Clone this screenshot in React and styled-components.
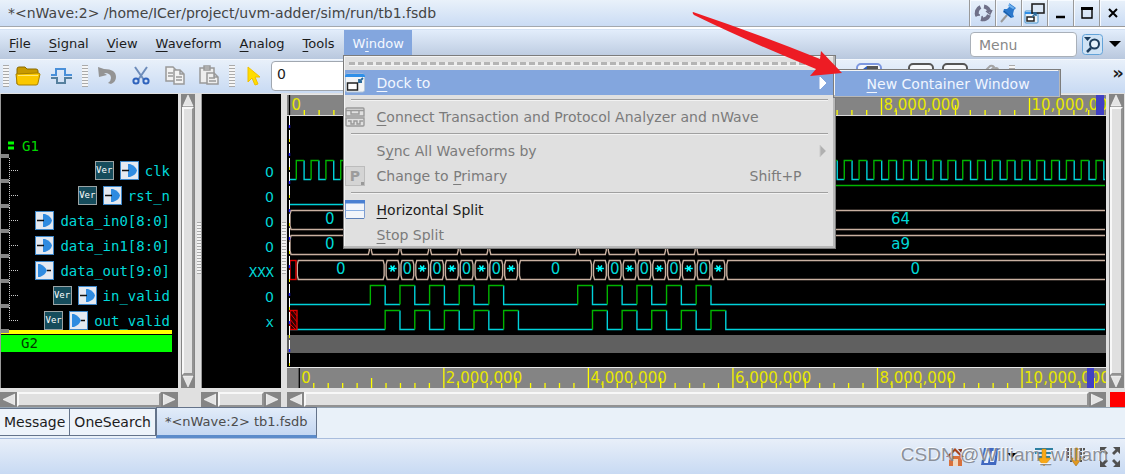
import React from 'react'
import styled, { createGlobalStyle } from "styled-components";

const GlobalStyle = createGlobalStyle`
* { box-sizing: border-box; }
body {
  margin: 0;
  background: #e0e0e0;
  font-family: "DejaVu Sans", sans-serif;
  font-size: 14px;
  color: #1c1c1c;
}
button, input { font: inherit; color: inherit; }
button { padding: 0; border: 0; background: none; }
u { text-underline-offset: 3px; text-decoration-thickness: 1px; }
`

const Page = styled.div`
position: relative;
min-height: 100vh;
display: flex;
flex-direction: column;
overflow: hidden;
`

/* title bar */
const TitleBar = styled.header`
height: 29px;
display: flex;
align-items: stretch;
background: linear-gradient(#e9f1fa, #c9dbf4);
border-bottom: 2px solid #fff;
box-shadow: inset 0 -1px #a3a8ae;
`
const Title = styled.h1`
flex: 1;
margin: 0;
padding-left: 8px;
font-size: 14px;
font-weight: 400;
line-height: 26px;
color: #444;
white-space: nowrap;
overflow: hidden;
`
const TitleButton = styled.button`
width: 26px;
display: flex;
align-items: center;
justify-content: center;
border-left: 1px solid #999;
border-bottom: 1px solid #999;
box-shadow: inset 1px 1px #f6faff;
`

/* menu bar */
const MenuBar = styled.nav`
height: 30px;
display: flex;
align-items: stretch;
gap: 1px;
font-size: 13px;
background: linear-gradient(#e2edfb, #b9c8de);
border-top: 1px solid #d4e2f4;
`
const MenuItem = styled.div`
position: relative;
display: flex;
height: 26px;
z-index: ${(props)=> props.$open ? 5 : 0};
`
const MenuButton = styled.button`
padding: 0 8px 0 9px;
color: ${(props)=> props.$open ? "#f4f8ff" : "#1c1c1c"};
background: ${(props)=> props.$open ? "#83a6de" : "none"};
`
const SearchArea = styled.div`
margin-left: auto;
padding: 2px 3px 0 0;
display: flex;
align-items: flex-start;
gap: 5px;
`
const SearchInput = styled.input`
width: 107px;
height: 25px;
padding: 0 8px;
font-size: 14px;
border: 1px solid #a9b0b9;
border-radius: 4px;
background: #fff;
&::placeholder { color: #888; opacity: 1; }
`
const IconButton = styled.button`
display: flex;
align-items: center;
height: 24px;
`

const Popup = styled.div`
position: absolute;
left: ${(props)=> props.$sub ? "488px" : "-1px"};
top: ${(props)=> props.$sub ? "-1px" : "25px"};
width: ${(props)=> props.$sub ? "228px" : "493px"};
padding: 1px;
font-size: 14px;
background: #e0e0e0;
border: 1px solid #7c7c7c;
box-shadow: inset -2px -2px #b8b8b8, inset 1px 1px #f4f4f4;
`
const TearOff = styled.div`
height: 13px;
padding: 5px 4px 0;
&::before {
  content: "";
  display: block;
  height: 3px;
  background: repeating-linear-gradient(90deg, #b4b4b4 0 6px, #ececec 6px 9px);
  border-bottom: 1px solid #f4f4f4;
}
`
const PopupRow = styled.button`
position: relative;
width: 100%;
height: 25px;
display: flex;
align-items: center;
text-align: left;
padding-right: ${(props)=> props.$sub ? "0" : "7px"};
color: ${(props)=> props.$active ? "#f1f6ff" : props.disabled ? "#7b7b7b" : "#1c1c1c"};
background: ${(props)=> props.$active ? "#83a6de" : "none"};
`
const RowIcon = styled.span`
width: 32px;
height: 22px;
display: flex;
align-items: center;
`
const RowLabel = styled.span`
flex: 1;
white-space: nowrap;
`
const Shortcut = styled.span`
margin-right: 25px;
`
const Divider = styled.hr`
height: 9px;
margin: 0 6px;
border: 0;
background: linear-gradient(transparent 4px, #a0a0a0 4px 5px, #f2f2f2 5px 6px, transparent 6px);
`
const Pointer = styled.svg`
position: absolute;
left: 346px;
top: -20px;
pointer-events: none;
`

/* tool bar */
const ToolBar = styled.div`
height: 34px;
display: flex;
align-items: center;
padding-bottom: 2px;
background: linear-gradient(#e8f0fa, #c8daf3);
border-top: 1px solid #f4f8fd;
`
const Grip = styled.span`
width: 6px;
height: 22px;
margin: 0 2px 0 3px;
background: repeating-linear-gradient(#aaa 0 1px, #f6f6f6 1px 3px);
`
const Tool = styled.button`
width: 34px;
height: 30px;
display: flex;
align-items: center;
justify-content: center;
`
const TimeInput = styled.input`
width: 100px;
height: 30px;
padding: 0 5px 3px;
background: #fff;
border: 1px solid #a0a7b0;
border-radius: 4px;
`
const ToolGroup = styled.div`
margin-left: auto;
margin-right: 108px;
display: flex;
align-items: center;
`
const BoxTool = styled(Tool)`
width: 26px;
height: 26px;
margin: 0 4px;
margin-right: ${(props)=> props.$marker ? "22px" : "4px"};
border: 2px solid ${(props)=> props.$marker ? "#7d98e0" : "#555"};
border-radius: 5px;
background: #f6f8fb;
`
const More = styled.button`
width: 14px;
font-size: 18px;
font-weight: 700;
line-height: 26px;
margin: 0 0 6px -14px;
`

/* panes */
const Panes = styled.main`
display: grid;
grid-template-columns: 178px 18px 5px 80px 6px 1fr 19px;
grid-template-rows: 294px 15px;
row-gap: 4px;
padding-top: 1px;
background: #e0e0e0;
`
const Pane = styled.section`
background: #000;
color: #00d8d8;
font-family: "DejaVu Sans Mono", monospace;
font-size: 14px;
overflow: hidden;
padding-top: ${(props)=> props.$wave ? "0" : "39px"};
border-left: ${(props)=> props.$wave ? "0" : "1px solid #999"};
`
const SignalRow = styled.div`
height: 25px;
display: flex;
align-items: center;
gap: 6px;
padding-right: 8px;
`
const SignalName = styled.span`
white-space: pre;
`
const GroupName = styled.span`
color: ${(props)=> props.$selected ? "#003c00" : "#00d800"};
`
const Spring = styled.span`
flex: 1;
`
const Selected = styled.div`
height: 22px;
margin: -3px 6px 0 0;
padding-left: 20px;
line-height: 18px;
border-top: 4px solid #ff0;
box-shadow: inset 0 1px #000;
background: #0f0;
`
const LangBadge = styled.span`
width: 19px;
height: 19px;
border: 1px solid #9aa3a5;
background: #164c5c;
color: #fff;
font-size: 9px;
line-height: 16px;
text-align: center;
`
const Value = styled.div`
height: 25px;
padding: 1px 7px 0 0;
line-height: 26px;
text-align: right;
font-family: ${(props)=> props.$digit ? '"DejaVu Sans", sans-serif' : "inherit"};
`
const Splitter = styled.div`
background: repeating-linear-gradient(#aaa 0 1px, #f2f2f2 1px 3px) center 128px / 4px 52px no-repeat;
`
const ScrollBar = styled.div`
display: flex;
flex-direction: ${(props)=> props.$vertical ? "column" : "row"};
margin: ${(props)=> props.$vertical ? "0 1px 0 3px" : "0"};
background: #858585;
padding: 0 1px;
`
const ScrollArrow = styled.button`
flex: none;
width: ${(props)=> props.$vertical ? "12px" : "16px"};
height: ${(props)=> props.$vertical ? "13px" : "15px"};
display: flex;
align-items: center;
justify-content: center;
`
const Thumb = styled.div`
flex: 1;
background: #e0e0e0;
border: 2px solid;
border-color: #f8f8f8 #929292 #929292 #f8f8f8;
`
const WaveSvg = styled.svg`
display: block;
width: 100%;
height: 294px;
`
const Corner = styled.div`
margin-left: 4px;
background: #f00;
`

/* bottom tabs and status bar */
const Tabs = styled.div`
height: 32px;
display: flex;
align-items: flex-start;
background: #e9f1f9;
border-bottom: 1px solid #a9bddd;
box-shadow: inset 0 1px #94a4b4;
`
const Tab = styled.button`
height: ${(props)=> props.$active ? "31px" : "28px"};
margin-top: ${(props)=> props.$active ? "0" : "1px"};
padding: ${(props)=> props.$active ? "0 8px 1px" : "0 4px"};
border: 1px solid #64738a;
border-left-width: ${(props)=> props.$active ? "1px" : "0"};
border-bottom: ${(props)=> props.$active ? "3px solid #5b8bca" : "1px solid #64738a"};
font-size: ${(props)=> props.$active ? "13px" : "14px"};
color: ${(props)=> props.$active ? "#4c4c4c" : "#1c1c1c"};
background: ${(props)=> props.$active ? "linear-gradient(#e2ecf9, #c4d7f2)" : "#edf3fa"};
`
const StatusBar = styled.footer`
flex: 1;
min-height: 34px;
position: relative;
display: flex;
justify-content: flex-end;
align-items: center;
gap: 14px;
padding-right: 4px;
background: linear-gradient(#e8eff9, #c8daf3);
`
const Watermark = styled.span`
position: absolute;
right: 17px;
bottom: 8px;
font-family: "Liberation Sans", sans-serif;
font-size: 19px;
color: rgba(128, 132, 140, 0.9);
text-shadow: -1px -1px rgba(255, 255, 255, 0.8);
white-space: nowrap;
`

const CYAN = "#00d2da"
const GREEN = "#00b400"
const BUS = "#c9b0a0"
const END = 818

const menus = [["F", "ile"], ["S", "ignal"], ["V", "iew"], ["W", "aveform"], ["A", "nalog"], ["T", "ools"]]

const signals = [
  { name: "clk", dir: "in", lang: true, value: "0" },
  { name: "rst_n", dir: "in", lang: true, value: "0" },
  { name: "data_in0[8:0]", dir: "in", value: "0" },
  { name: "data_in1[8:0]", dir: "in", value: "0" },
  { name: "data_out[9:0]", dir: "out", value: "XXX" },
  { name: "in_valid", dir: "in", lang: true, value: "0" },
  { name: "out_valid", dir: "out", lang: true, value: "x" },
]

// x of the n-th rising clock edge
const t = (n)=> 9.3 + 14.81 * n

// y of the high level of each signal
const high = { clk: 66.5, rst: 91.5, in0: 116.5, in1: 141.5, out: 166.5, inValid: 191.5, outValid: 216.5 }

const range = (n)=> Array.from({ length: n }, (_, i)=> i)

const clkPulses = range(55).map((n)=> [t(n), Math.min(t(n) + 7.8, END)])
const inPulses = [5, 7, 9, 11, 13, 19, 21, 23, 25, 27].map((n)=> [t(n), t(n + 1)])
const outPulses = [6, 8, 10, 12, 14, 20, 22, 24, 26, 28].map((n)=> [t(n), t(n + 1)])

const in1Data = [[2, t(5), "0"], [t(5), t(7), "99"], [t(7), t(9), "e2"], [t(9), t(11), "f6"], [t(11), t(13), "64"], [t(13), t(19), "20"], [t(19), t(21), "a5"], [t(21), t(23), "e2"], [t(23), t(25), "74"], [t(25), t(27), "b2"], [t(27), END, "a9"]]
const in0Data = [[2, t(5), "0"], [t(5), t(27), "0"], [t(27), END, "64"]]
const outData = [
  [t(0), t(6), "0"],
  ...range(9).map((i)=> [t(6 + i), t(7 + i), i % 2 ? "0" : "*"]),
  [t(15), t(20), "0"],
  ...range(9).map((i)=> [t(20 + i), t(21 + i), i % 2 ? "0" : "*"]),
  [t(29), END, "0"],
]

function Wave({y, pulses}) {
  const low = y + 19
  let rise = "", fall = "M2 " + low
  pulses.forEach(([a, b])=>{
    rise += `M${a} ${low}V${y}H${b}`
    fall += `H${a}M${b} ${y}V${low}`
  })
  if (pulses[pulses.length - 1][1] < END) fall += `H${END}`
  return (
    <g fill="none" strokeWidth="1.4">
      <path d={fall} stroke={CYAN} />
      <path d={rise} stroke={GREEN} />
    </g>
  )
}

function Bus({y, data}) {
  return data.map(([a, b, label], i)=> (
    <g key={i}>
      <path
        d={`M${b - 2} ${y}H${a + 2}L${a + 1} ${y + 4}V${y + 15}L${a + 2} ${y + 19}H${b - 2}` + (b < END ? `L${b - 1} ${y + 15}V${y + 4}Z` : "M" + b + " " + y + "h-3m3 19h-3")}
        fill="none" stroke={BUS} strokeWidth="1.4"
      />
      {label === "*" ? (
        <path d={`M${(a + b) / 2 - 4} ${y + 8}h8m-6 -3l4 6m0 -6l-4 6`} stroke="#0ff" strokeWidth="1.4" />
      ) : (
        <text x={(a + b) / 2} y={y + 13} fill="#00d8d8" fontSize="15" textAnchor="middle">{label}</text>
      )}
    </g>
  ))
}

function Ruler({y, start, step}) {
  const labels = ["0", "2,000,000", "4,000,000", "6,000,000", "8,000,000", "10,000,000"]
  return (
    <g>
      <rect x="0" y={y} width="100%" height="20" fill="#848484" />
      <rect x="0" y={y - 1} width="100%" height="1" fill="#e8e8e8" />
      {range(60).map((i)=>{
        const h = i % 10 === 0 ? 20 : i % 5 === 0 ? 10 : 5
        const x = start + step * i
        return x < END && <path key={i} d={`M${x} ${y + 20}v-${h}`} stroke={i === 0 ? "#000" : "#ff0"} strokeWidth="1.3" />
      })}
      {labels.map((label, i)=> (
        <text key={label} x={start + step * 10 * i + 2} y={y + 15} fill="#e8e800" fontSize="15">{label}</text>
      ))}
    </g>
  )
}

function Waveforms() {
  return (
    <WaveSvg fontFamily="DejaVu Sans, sans-serif" role="img" aria-label="Waveforms">
      <Ruler y={1} start={2.5} step={14.8} />
      <rect x="0" y="21" width="100%" height="1" fill="#d8d8d8" />
      <rect x="809" y="1" width="8" height="20" fill="#4040c4" />
      <Wave y={high.clk} pulses={clkPulses} />
      <path d={`M2 ${high.rst + 19}H172`} stroke={CYAN} strokeWidth="1.4" />
      <path d={`M172 ${high.rst + 19}V${high.rst}H${END}`} fill="none" stroke={GREEN} strokeWidth="1.4" />
      <Bus y={high.in0} data={in0Data} />
      <Bus y={high.in1} data={in1Data} />
      <Bus y={high.out} data={outData} />
      <rect x="3" y={high.out} width="6" height="19" fill="none" stroke="#e00000" strokeWidth="1.4" />
      <Wave y={high.inValid} pulses={inPulses} />
      <Wave y={high.outValid} pulses={outPulses} />
      <rect x="3" y={high.outValid} width="7" height="19" fill="#300000" stroke="#e00000" strokeWidth="1.4" />
      <path d="M3 219l7 9m-7 -3l7 9m-7 -4l5 5m-2 -18l4 5" stroke="#e00000" />
      <rect x="0" y="241" width="100%" height="18" fill="#606060" />
      <path d="M2.5 22V273" stroke="#fff" strokeDasharray="9 5" />
      <path d="M2.5 31V273" stroke="#22f" strokeDasharray="3 25" strokeWidth="1.4" />
      <path d="M2.5 45V273" stroke="#e8e800" strokeDasharray="3 25" />
      <Ruler y={274} start={12.3} step={14.455} />
      <rect x="800" y="274" width="7" height="20" fill="#4040c4" />
    </WaveSvg>
  )
}

function Port({dir}) {
  return (
    <svg width="19" height="19">
      <rect x="0.5" y="0.5" width="18" height="18" fill="#e4e9f1" stroke="#3d86c8" />
      {dir === "in" ? (
        <>
          <path d="M8 3h2q6 2 7 6.5q-1 4.5 -7 6.5h-2z" fill="#2f8be0" />
          <path d="M2 9.5h7" stroke="#111" strokeWidth="1.5" />
        </>
      ) : (
        <>
          <path d="M3 3h2q5 2 7 6.5q-2 4.5 -7 6.5h-2z" fill="#2f8be0" />
          <path d="M12 9.5h4" stroke="#111" strokeWidth="1.5" />
        </>
      )}
    </svg>
  )
}

function Branch({head, last}) {
  return (
    <svg width={head ? 15 : 20} height="25">
      {head ? (
        <path d="M7 10h6m-6 5h6" stroke="#0f0" strokeWidth="3" />
      ) : (
        <>
          <path d={last ? "M8.5 0v13" : "M8.5 0v25"} stroke="#ccc" strokeDasharray="1 1" />
          <path d="M10 12.5h8" stroke="#ccc" strokeDasharray="1 1" />
        </>
      )}
      <rect x="0" y="21" width="8" height="4" fill="#858585" />
    </svg>
  )
}

function ArrowShape({dir}) {
  const d = { up: "M6 1L11 12H1Z", down: "M6 12L11 1H1Z", left: "M0 6.5L12 1V12Z", right: "M12 6.5L0 1V12Z" }[dir]
  return <svg width="12" height="13"><path d={d} fill="#e4e4e4" stroke="#fff" strokeWidth="0.6" /></svg>
}

function Scroll({vertical}) {
  return (
    <ScrollBar $vertical={vertical}>
      <ScrollArrow $vertical={vertical} aria-label={vertical ? "Scroll up" : "Scroll left"}><ArrowShape dir={vertical ? "up" : "left"} /></ScrollArrow>
      <Thumb />
      <ScrollArrow $vertical={vertical} aria-label={vertical ? "Scroll down" : "Scroll right"}><ArrowShape dir={vertical ? "down" : "right"} /></ScrollArrow>
    </ScrollBar>
  )
}

const DockIcon = ()=> (
  <svg width="20" height="20">
    <rect x="0.5" y="1" width="19" height="18" rx="2" fill="#f2f4f6" stroke="#b8c8d8" />
    <path d="M0 4V3q0-2 2-2h16q2 0 2 2v1z" fill="#2f8fe8" />
    <rect x="2.5" y="10" width="10" height="7" fill="#fff" stroke="#222" strokeWidth="1.5" />
    <path d="M18 5l-4 4m0 -3v3h3" stroke="#2a6a9c" strokeWidth="1.8" fill="none" />
  </svg>
)

const AnalyzerIcon = ()=> (
  <svg width="20" height="20" fill="none" stroke="#999" strokeWidth="1.4">
    <path d="M1 9V2q0-1 1-1h16q1 0 1 1v7zM1 3.5h18M6 4v3h8V4" />
    <path d="M1 11h18v7q0 1-1 1H2q-1 0-1-1zM3 14h3v3h3v-3h3v3h3v-3h3" />
  </svg>
)

const PrimaryIcon = ()=> (
  <svg width="20" height="20">
    <rect x="0.5" y="0.5" width="19" height="19" fill="#d4d4d4" stroke="#bcbcbc" />
    <text x="10" y="15" fontSize="14" fontWeight="700" textAnchor="middle" fill="#9c9c9c">P</text>
    <rect x="16" y="16" width="3" height="3" fill="#999" />
  </svg>
)

const SplitIcon = ()=> (
  <svg width="20" height="20">
    <rect x="0.5" y="0.5" width="19" height="18" rx="1" fill="#f2f5fa" stroke="#7d9cd0" />
    <path d="M0 0h20v3.500H0z" fill="#4a80d2" />
    <path d="M1 10.5h18" stroke="#8ab0e4" />
    <path d="M1 18.5h18" stroke="#5c80b8" />
  </svg>
)

const SubArrow = ({muted})=> (
  <svg width="8" height="14"><path d="M1 1l6 6-6 6z" fill={muted ? "#b0b0b0" : "#fff"} stroke={muted ? "#ccc" : "#fff"} /></svg>
)

const SubMenuAnchor = styled.div`
position: relative;
`

function WindowMenu() {
  return (
    <MenuItem $open>
      <MenuButton $open aria-haspopup="menu" aria-expanded="true">W<u>i</u>ndow</MenuButton>
      <Popup role="menu">
        <TearOff />
        <SubMenuAnchor>
          <PopupRow $active role="menuitem">
            <RowIcon><DockIcon /></RowIcon><RowLabel><u>D</u>ock to</RowLabel><SubArrow />
          </PopupRow>
          <Popup $sub role="menu">
            <PopupRow $active $sub role="menuitem"><RowIcon /><RowLabel><u>N</u>ew Container Window</RowLabel></PopupRow>
          </Popup>
        </SubMenuAnchor>
        <Divider />
        <PopupRow disabled role="menuitem"><RowIcon><AnalyzerIcon /></RowIcon><RowLabel><u>C</u>onnect Transaction and Protocol Analyzer and nWave</RowLabel></PopupRow>
        <Divider />
        <PopupRow disabled role="menuitem"><RowIcon /><RowLabel>S<u>y</u>nc All Waveforms by</RowLabel><SubArrow muted /></PopupRow>
        <PopupRow disabled role="menuitem"><RowIcon><PrimaryIcon /></RowIcon><RowLabel>Change to <u>P</u>rimary</RowLabel><Shortcut>Shift+P</Shortcut></PopupRow>
        <Divider />
        <PopupRow role="menuitem"><RowIcon><SplitIcon /></RowIcon><RowLabel><u>H</u>orizontal Split</RowLabel></PopupRow>
        <PopupRow disabled role="menuitem"><RowIcon /><RowLabel><u>S</u>top Split</RowLabel></PopupRow>
      </Popup>
      <Pointer width="156" height="70">
        <path d="M3 2Q65 23 130 49L131 41L152 63L120 66L126 59Q55 30 4 5Q2 3 3 2Z" fill="#ed1c24" />
      </Pointer>
    </MenuItem>
  )
}

function App() {
  return (
    <>
      <GlobalStyle />
      <Page>
        <TitleBar>
          <Title>*&lt;nWave:2&gt; /home/ICer/project/uvm-adder/sim/run/tb1.fsdb</Title>
          <TitleButton aria-label="Reload">
            <svg width="20" height="20" fill="none" stroke="#6f7088" strokeWidth="4"><path d="M11 3.500a6.500 6.500 0 0 1 5.500 6M16 12a6.500 6.500 0 0 1-8 4M4.500 13a6.500 6.500 0 0 1 3-9" /><path d="M13 8l4 3 2-4M10 18l-1-5M2 12l5 0" strokeWidth="1.5" /></svg>
          </TitleButton>
          <TitleButton aria-label="Pin">
            <svg width="20" height="22"><path d="M8 13l-6 7" stroke="#999" strokeWidth="2" /><path d="M10 1l7 5-2 2-1 4 1 3-3 1-8-6 1-3 3 0 3-3z" fill="#2b78cc" /><path d="M10 2l6 4-2 1-5-3z" fill="#6fb1ee" /><path d="M5 9l7 6" stroke="#155296" /></svg>
          </TitleButton>
          <TitleButton aria-label="Undock">
            <svg width="22" height="22"><rect x="1" y="9" width="13" height="12" rx="1" fill="#e8f1f8" stroke="#4794cf" /><path d="M1 11h13" stroke="#2f8fe8" strokeWidth="2" /><rect x="3" y="15" width="7" height="4" fill="#fff" stroke="#222" strokeWidth="1.5" /><rect x="8" y="2" width="12" height="9" fill="#dbe7f5" stroke="#222" strokeWidth="1.6" /><path d="M8 15l4-4m-3 0h3v3" fill="none" stroke="#2a6a9c" strokeWidth="1.5" /></svg>
          </TitleButton>
          <TitleButton aria-label="Minimize">
            <svg width="12" height="12"><path d="M1 10h9" stroke="#000" strokeWidth="2.5" /></svg>
          </TitleButton>
          <TitleButton aria-label="Maximize">
            <svg width="12" height="12"><path d="M1 1v10h10V1z" fill="none" stroke="#000" strokeWidth="1.4" /><path d="M0 1.5h12" stroke="#000" strokeWidth="3" /></svg>
          </TitleButton>
          <TitleButton aria-label="Close">
            <svg width="12" height="12"><path d="M2 2l8 8m0-8l-8 8" stroke="#000" strokeWidth="2" /></svg>
          </TitleButton>
        </TitleBar>

        <MenuBar>
          {menus.map(([key, rest])=> (
            <MenuItem key={rest}><MenuButton><u>{key}</u>{rest}</MenuButton></MenuItem>
          ))}
          <WindowMenu />
          <SearchArea>
            <SearchInput aria-label="Menu" placeholder="Menu" />
            <IconButton aria-label="Search">
              <svg width="21" height="21"><rect x="0.5" y="0.5" width="20" height="20" rx="3" fill="#cfe3f5" stroke="#63a3d8" /><path d="M2 3h7l-3.500 4z" fill="#1d3d5c" /><circle cx="12.500" cy="10" r="4.500" fill="#e6f2fb" stroke="#1d3d5c" strokeWidth="2" /><path d="M9 14l-4 4" stroke="#1d3d5c" strokeWidth="2.500" /></svg>
            </IconButton>
            <IconButton aria-label="Search options">
              <svg width="14" height="8"><path d="M1 1h12l-6 6z" fill="#000" /></svg>
            </IconButton>
          </SearchArea>
        </MenuBar>

        <ToolBar>
          <Grip />
          <Tool aria-label="Open">
            <svg width="26" height="20"><path d="M2 18V3q0-2 2-2h6l2 2h9q2 0 2 2v3" fill="#c89a00" stroke="#8a6a00" /><path d="M1 8l21-1q3 0 3 1l-2 9q0 2-2 2H4q-2 0-2-2z" fill="#fbc800" stroke="#a88000" /><path d="M3 9.5h20" stroke="#ffe878" /></svg>
          </Tool>
          <Tool aria-label="Get signals">
            <svg width="22" height="18" fill="none" strokeWidth="2"><path d="M0 8h5V2h9v6h7" stroke="#4a90d9" /><path d="M0 11h6v5h8v-5h7" stroke="#56809e" /></svg>
          </Tool>
          <Grip />
          <Tool aria-label="Undo">
            <svg width="20" height="20"><path d="M1 1l1 10 8-2-3-2q7 0 7 5 0 3-3 5l3 1q5-2 5-7 0-8-12-8z" fill="#949494" /></svg>
          </Tool>
          <Tool aria-label="Cut">
            <svg width="18" height="20" fill="none"><path d="M3 1l9 13M15 1L6 14" stroke="#6d8cba" strokeWidth="2" /><circle cx="4" cy="15" r="2.6" stroke="#2f63bc" strokeWidth="2" /><circle cx="14" cy="15" r="2.6" stroke="#2f63bc" strokeWidth="2" /></svg>
          </Tool>
          <Tool aria-label="Copy">
            <svg width="20" height="20" fill="#f2f2f2" stroke="#999" strokeWidth="1.5"><path d="M1 1h7l3 3v11H1zM3 7h5M3 10h5" /><path d="M9 4h6l4 4v10H9zM15 4v4h4M11 11h6M11 14h6" /></svg>
          </Tool>
          <Tool aria-label="Paste">
            <svg width="21" height="21" fill="#eee" stroke="#999" strokeWidth="1.5"><path d="M1 3h14v15H1zM5 1h6v4H5z" /><path d="M8 8h7l4 4v7H8zM15 8v4h4M10 13h6M10 16h7" /></svg>
          </Tool>
          <Grip />
          <Tool aria-label="Select">
            <svg width="14" height="20"><path d="M1 1v15l4-4 3 7 3-1-3-7h5z" fill="#fd0" stroke="#f0c000" /></svg>
          </Tool>
          <TimeInput aria-label="Cursor time" defaultValue="0" />
          <ToolGroup>
            <BoxTool $marker aria-label="Marker"><svg width="22" height="22"><path d="M9 1h11v3H9z" fill="#555" /><path d="M4 6l4-3v10" stroke="#2a5cc0" fill="none" strokeWidth="2" /></svg></BoxTool>
            <BoxTool aria-label="Previous edge"><svg width="16" height="16"><path d="M11 3L5 8l6 5" stroke="#888" fill="none" strokeWidth="2" /></svg></BoxTool>
            <BoxTool aria-label="Next edge"><svg width="16" height="16"><path d="M5 3l6 5-6 5" stroke="#888" fill="none" strokeWidth="2" /></svg></BoxTool>
            <Tool aria-label="Attach"><svg width="22" height="24" fill="none" stroke="#a4a4a4" strokeWidth="2"><path d="M2 12L12 2q3-1 4 1L6 14M8 15L18 4q2 0 2 2L10 17" /></svg></Tool>
            <Grip />
          </ToolGroup>
          <More aria-label="More tools">»</More>
        </ToolBar>

        <Panes>
          <Pane>
            <SignalRow><Branch head /><GroupName>G1</GroupName></SignalRow>
            {signals.map((s, i)=> (
              <SignalRow key={s.name}>
                <Branch last={i === signals.length - 1} />
                <Spring />
                {s.lang && <LangBadge>Ver</LangBadge>}
                <Port dir={s.dir} />
                <SignalName>{s.name}</SignalName>
              </SignalRow>
            ))}
            <Selected><GroupName $selected>G2</GroupName></Selected>
          </Pane>
          <Scroll vertical />
          <Splitter />
          <Pane>
            <SignalRow />
            {signals.map((s)=> <Value key={s.name} $digit={s.value === "0"}>{s.value}</Value>)}
          </Pane>
          <Splitter />
          <Pane $wave><Waveforms /></Pane>
          <Scroll vertical />

          <Scroll />
          <span />
          <span />
          <Scroll />
          <span />
          <Scroll />
          <Corner />
        </Panes>

        <Tabs>
          <Tab>Message</Tab>
          <Tab>OneSearch</Tab>
          <Tab $active>*&lt;nWave:2&gt; tb1.fsdb</Tab>
        </Tabs>
        <StatusBar>
          <svg width="20" height="20"><path d="M4 9h13v10H4z" fill="#d8713c" /><path d="M1 10L10 1l9 9h-3l-6-6-6 6z" fill="#a8431c" /><path d="M13 2h4v5z" fill="#8c3818" /><path d="M8 12h5v7H8z" fill="#f0d8c0" /></svg>
          <svg width="42" height="20"><path d="M5 1h15l-3 17H2z" fill="#4068c0" /><path d="M7 4h4l-2 12H5zM13 4h4l-2 11h-4z" fill="#e8f0fc" /><path d="M28 6h10l-5 5z" fill="#000" /></svg>
          <svg width="18" height="20"><path d="M0 2h18M0 6h18M3 10h12" stroke="#2d7fa0" strokeWidth="2" /><path d="M7 2h4v9h5l-7 8-7-8h5z" fill="#f8a818" stroke="#c88408" strokeWidth="0.5" /></svg>
          <svg width="18" height="20"><path d="M1 1v10M4 1v14M14 1v14M17 1v10" stroke="#555" strokeWidth="2" strokeDasharray="3 1" /><path d="M7 1h4v10h4l-6 8-6-8h4z" fill="#e09820" stroke="#986008" strokeWidth="0.5" /></svg>
          <svg width="22" height="22" fill="#505050"><path d="M1 1h7L5.500 3.500 9 7 7 9 3.500 5.500 1 8zM21 1h-7l2.500 2.500L13 7l2 2 3.500-3.500L21 8zM1 21h7l-2.500-2.500L9 15l-2-2-3.500 3.500L1 14zM21 21h-7l2.500-2.500L13 15l2-2 3.500 3.500L21 14z" /></svg>
          <Watermark>CSDN @William_william</Watermark>
        </StatusBar>
      </Page>
    </>
  )
}

export default App
